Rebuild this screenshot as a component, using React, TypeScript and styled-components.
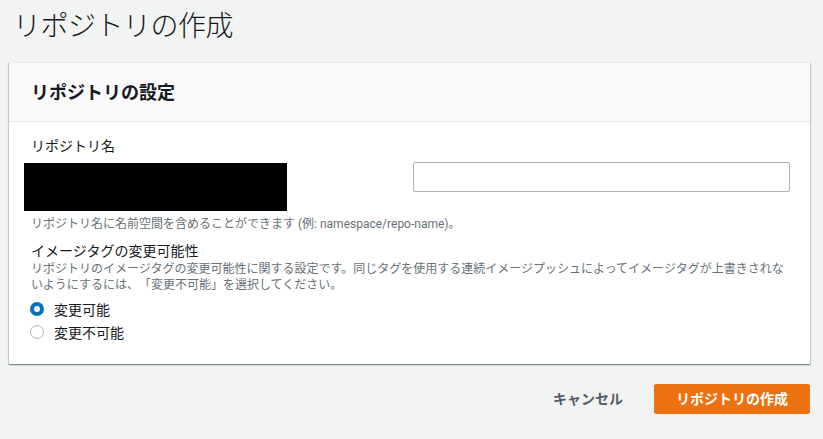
import React, { useState } from 'react';
import styled, { createGlobalStyle } from 'styled-components';

const palette = {
  bg: '#f2f3f3',
  text: '#16191f',
  subtle: '#687078',
  cancel: '#545b64',
  divider: '#eaeded',
  headerBg: '#fafafa',
  inputBorder: '#aab7b8',
  blue: '#0073bb',
  orange: '#ec7211',
};

const GlobalStyle = createGlobalStyle`
  html, body {
    margin: 0;
    padding: 0;
    background: ${palette.bg};
  }
  body {
    font-family: Roboto, "Noto Sans CJK JP", "Noto Sans", sans-serif;
    color: ${palette.text};
    text-spacing-trim: space-all;
    -webkit-font-smoothing: antialiased;
  }
  * {
    box-sizing: border-box;
  }
`;

const Page = styled.div`
  padding: 7px 13px 20px 9px;
`;

const PageTitle = styled.h1`
  margin: 0 0 15px 4px;
  font-size: 28px;
  line-height: 40px;
  font-weight: 300;
  letter-spacing: -0.5px;
`;

const Panel = styled.section`
  background: #fff;
  border-top: 1px solid ${palette.divider};
  box-shadow: 0 1px 1px 0 rgba(0, 28, 36, 0.3), 1px 1px 1px 0 rgba(0, 28, 36, 0.15),
    -1px 1px 1px 0 rgba(0, 28, 36, 0.15);
`;

const PanelHeader = styled.div`
  background: ${palette.headerBg};
  border-bottom: 1px solid ${palette.divider};
  padding: 19px 22px 17px;
`;

const PanelTitle = styled.h2`
  margin: 0;
  font-size: 18px;
  line-height: 22px;
  font-weight: 700;
`;

const PanelBody = styled.div`
  padding: 14px 20px 21px 22px;
`;

const Label = styled.div<{ $gap?: number }>`
  font-size: 14px;
  line-height: 20px;
  margin-top: ${(p) => p.$gap ?? 0}px;
`;

const Hint = styled.div<{ $gap?: number }>`
  font-size: 12px;
  line-height: 16px;
  color: ${palette.subtle};
  margin-top: ${(p) => p.$gap ?? 0}px;
`;

const NameRow = styled.div`
  display: grid;
  grid-template-columns: 1fr 1fr;
  column-gap: 4px;
  align-items: start;
  margin-top: 7px;
`;

const Redacted = styled.div`
  margin-left: -7px;
  width: 263px;
  height: 48px;
  background: #000;
`;

const TextInput = styled.input`
  margin-top: -1px;
  width: 100%;
  height: 30px;
  border: 1px solid ${palette.inputBorder};
  border-radius: 2px;
  padding: 4px 10px;
  font: inherit;
  font-size: 14px;
  outline: none;
`;

const RadioGroup = styled.div`
  display: flex;
  flex-direction: column;
  margin-top: 4px;
`;

const RadioRow = styled.label`
  display: flex;
  align-items: center;
  gap: 10px;
  height: 23px;
  font-size: 14px;
  cursor: pointer;
`;

const RadioDot = styled.span<{ $checked: boolean }>`
  width: 14px;
  height: 14px;
  margin-left: -1px;
  border-radius: 50%;
  background: #fff;
  border: ${(p) => (p.$checked ? `4px solid ${palette.blue}` : `1px solid ${palette.inputBorder}`)};
`;

const Footer = styled.div`
  display: flex;
  justify-content: flex-end;
  align-items: center;
  gap: 10px;
  margin-top: 20px;
`;

const Button = styled.button<{ $primary?: boolean }>`
  height: 30px;
  padding: 0 ${(p) => (p.$primary ? 21 : 20)}px;
  border-radius: 2px;
  border: 1px solid ${(p) => (p.$primary ? palette.orange : 'transparent')};
  background: ${(p) => (p.$primary ? palette.orange : 'transparent')};
  color: ${(p) => (p.$primary ? '#fff' : palette.cancel)};
  font-family: inherit;
  font-size: 14px;
  font-weight: 700;
  line-height: 28px;
  cursor: pointer;
`;

const options = ['変更可能', '変更不可能'];

const App: React.FC = () => {
  const [mutability, setMutability] = useState(options[0]);

  return (
    <Page>
      <GlobalStyle />
      <PageTitle>リポジトリの作成</PageTitle>
      <Panel>
        <PanelHeader>
          <PanelTitle>リポジトリの設定</PanelTitle>
        </PanelHeader>
        <PanelBody>
          <Label>リポジトリ名</Label>
          <NameRow>
            <Redacted />
            <TextInput type="text" />
          </NameRow>
          <Hint $gap={5}>リポジトリ名に名前空間を含めることができます (例: namespace/repo-name)。</Hint>

          <Label $gap={9}>イメージタグの変更可能性</Label>
          <Hint>
            リポジトリのイメージタグの変更可能性に関する設定です。同じタグを使用する連続イメージプッシュによってイメージタグが上書きされないようにするには、「変更不可能」を選択してください。
          </Hint>
          <RadioGroup>
            {options.map((option) => (
              <RadioRow key={option} onClick={() => setMutability(option)}>
                <RadioDot $checked={mutability === option} />
                {option}
              </RadioRow>
            ))}
          </RadioGroup>
        </PanelBody>
      </Panel>
      <Footer>
        <Button type="button">キャンセル</Button>
        <Button type="button" $primary>
          リポジトリの作成
        </Button>
      </Footer>
    </Page>
  );
};

export default App;
